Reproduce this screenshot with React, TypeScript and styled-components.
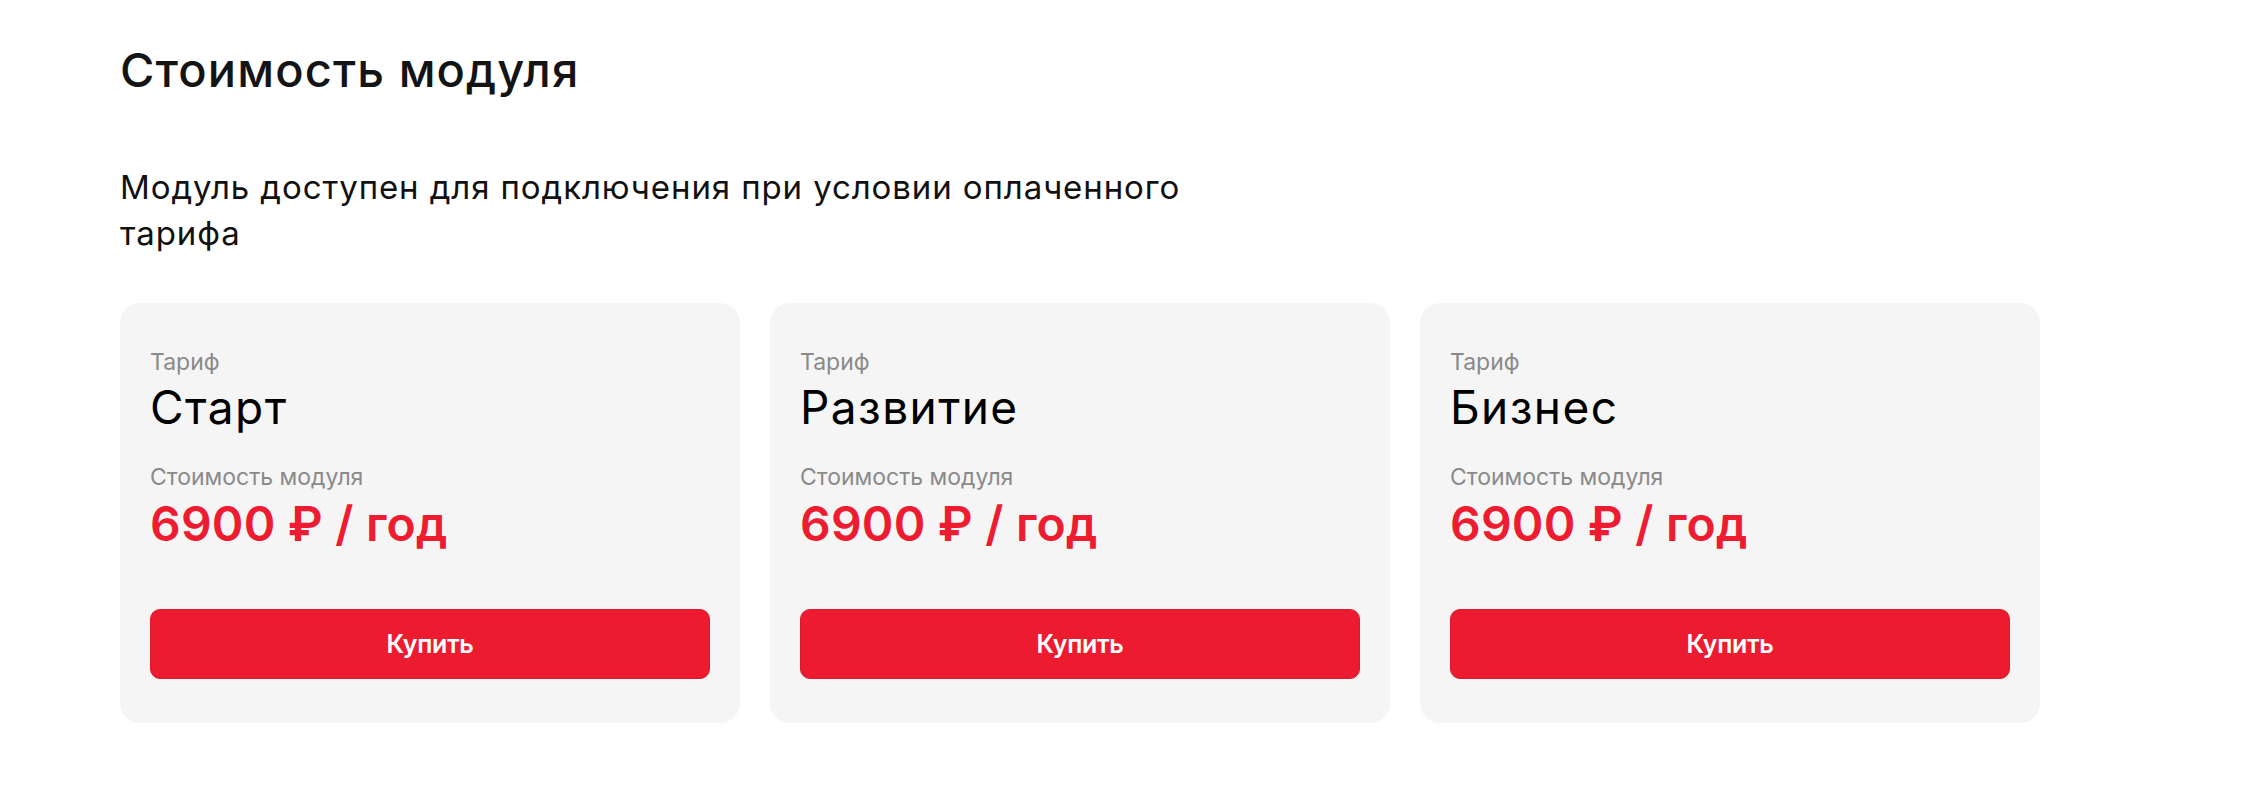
import React from "react";
import styled, { createGlobalStyle } from "styled-components";

const GlobalStyle = createGlobalStyle`
  html, body {
    margin: 0;
    padding: 0;
    background: #ffffff;
  }
  body {
    font-family: Inter, "Noto Sans", Arial, sans-serif;
    -webkit-font-smoothing: antialiased;
  }
  * { box-sizing: border-box; }
`;

const Page = styled.section`
  padding: 42px 120px 80px 120px;
  display: flex;
  flex-direction: column;
`;

const Heading = styled.h2`
  margin: 0;
  font-family: Inter, sans-serif;
  font-weight: 500;
  font-size: 47px;
  line-height: 56px;
  color: #141414;
  letter-spacing: 1.1px;
`;

const Lead = styled.p`
  margin: 66px 0 0 0;
  max-width: 1120px;
  font-family: Inter, sans-serif;
  font-weight: 400;
  font-size: 33px;
  line-height: 46px;
  letter-spacing: 0.9px;
  color: #111111;
`;

const Grid = styled.div`
  margin-top: 47px;
  display: grid;
  grid-template-columns: repeat(3, 620px);
  gap: 30px;
`;

const Card = styled.article`
  background: #f5f5f5;
  border-radius: 20px;
  padding: 45px 30px 44px 30px;
  display: flex;
  flex-direction: column;
`;

const Label = styled.div<{ $gap?: number }>`
  margin-top: ${(p) => p.$gap ?? 0}px;
  font-size: 23px;
  line-height: 28px;
  color: #8a8a8a;
  font-weight: 400;
`;

const Title = styled.div`
  margin-top: 5px;
  font-size: 46px;
  line-height: 52px;
  letter-spacing: 1.4px;
  color: #000000;
  font-weight: 400;
`;

const Price = styled.div`
  margin-top: 5px;
  font-size: 48px;
  line-height: 56px;
  letter-spacing: 0.2px;
  color: #ee1c30;
  font-weight: 600;
`;

const BuyButton = styled.button`
  margin-top: 57px;
  height: 70px;
  width: 100%;
  border: 1px solid #dc1a2d;
  border-radius: 10px;
  background: #ed1b30;
  color: #ffffff;
  font-family: Inter, sans-serif;
  font-size: 25px;
  font-weight: 600;
  letter-spacing: -0.3px;
  cursor: pointer;
`;

const plans = ["Старт", "Развитие", "Бизнес"];

export default function App() {
  return (
    <>
      <GlobalStyle />
      <Page>
        <Heading>Стоимость модуля</Heading>
        <Lead>
          Модуль доступен для подключения при условии оплаченного тарифа
        </Lead>
        <Grid>
          {plans.map((name) => (
            <Card key={name}>
              <Label>Тариф</Label>
              <Title>{name}</Title>
              <Label $gap={30}>Стоимость модуля</Label>
              <Price>6900 ₽ / год</Price>
              <BuyButton type="button">Купить</BuyButton>
            </Card>
          ))}
        </Grid>
      </Page>
    </>
  );
}
